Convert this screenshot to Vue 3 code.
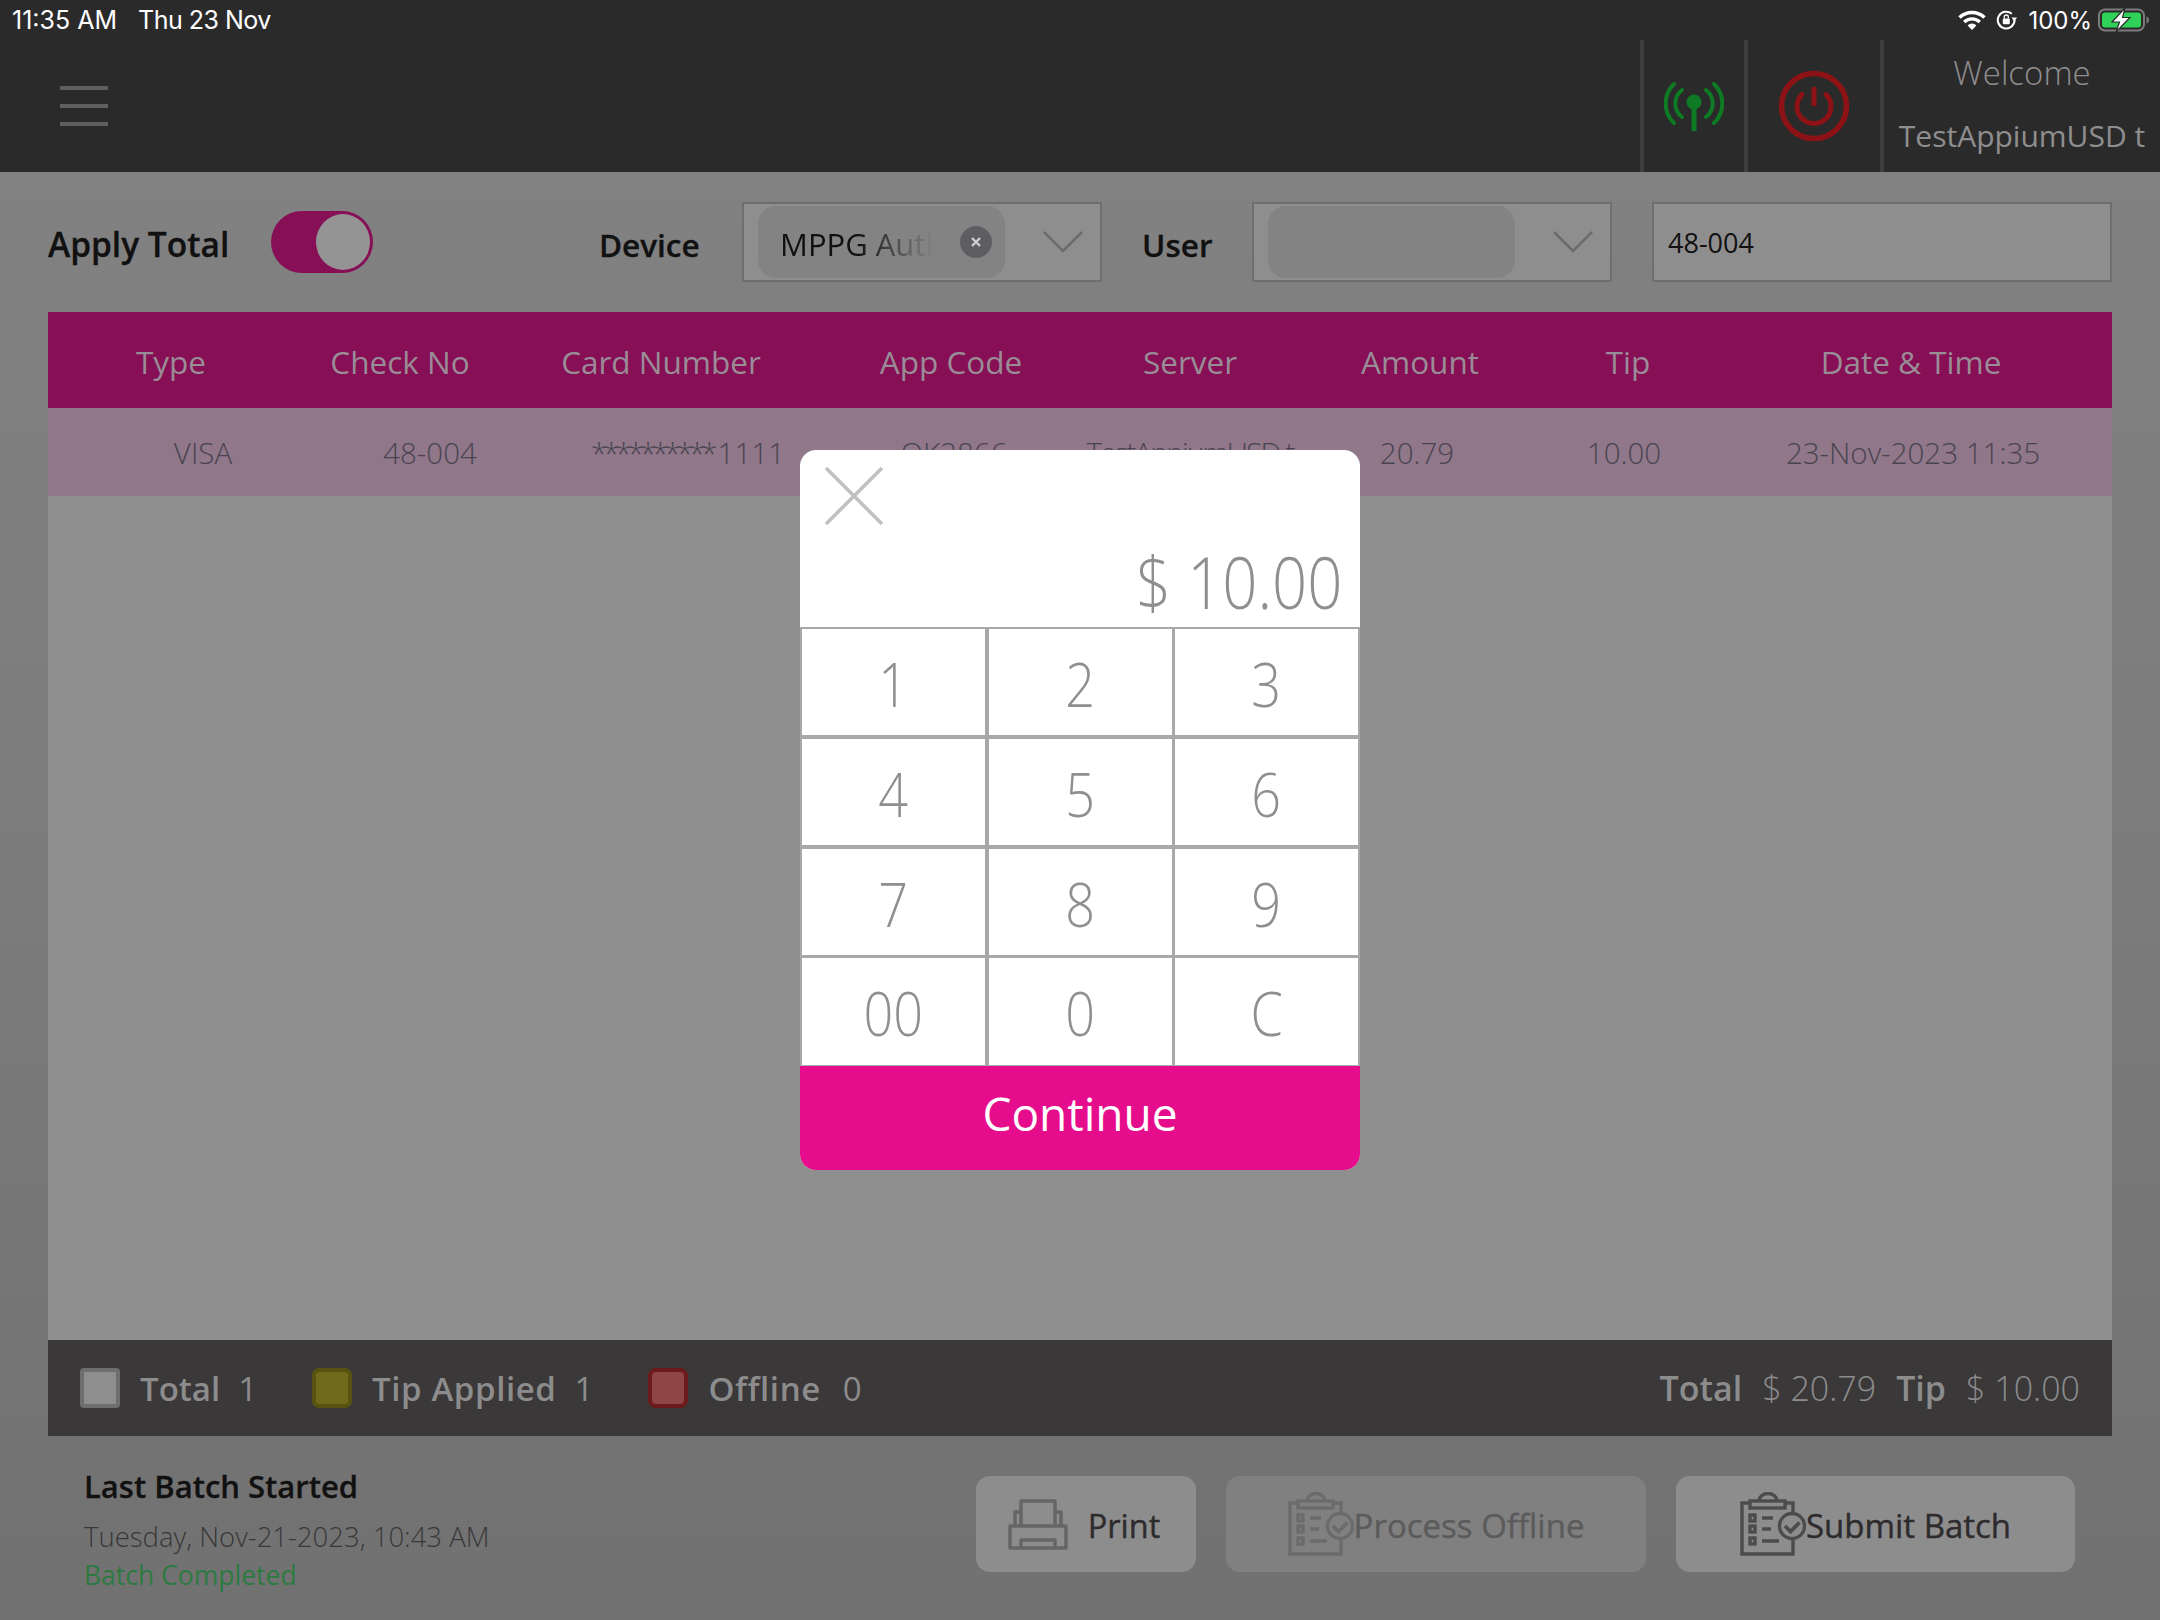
<template>
    <div class="screen">
        <header class="topbar">
            <div class="status-bar">
                <div class="status-time">
                    <span>11:35 AM</span>
                    <span class="status-date">Thu 23 Nov</span>
                </div>
                <div class="status-icons">
                    <svg class="wifi" width="28" height="20" viewBox="0 0 28 20">
                        <path d="M1.5 7.5a18 18 0 0 1 25 0" fill="none" stroke="#fff" stroke-width="3.4" />
                        <path d="M6.2 12a11.4 11.4 0 0 1 15.6 0" fill="none" stroke="#fff" stroke-width="3.4" />
                        <path d="M14 20l-4.4-4.6a6.2 6.2 0 0 1 8.8 0z" fill="#fff" />
                    </svg>
                    <svg class="rotation" width="22" height="20" viewBox="0 0 22 20">
                        <path d="M18.6 10a8.4 8.4 0 1 1-2.8-6.2" fill="none" stroke="#fff" stroke-width="2" />
                        <path d="M15.5 7.5l5.5 0-2.7 4z" fill="#fff" />
                        <rect x="6.8" y="8.6" width="7" height="5.6" rx="1" fill="#fff" />
                        <path d="M8.3 8.6V7a2 2 0 0 1 4 0v1.6" fill="none" stroke="#fff" stroke-width="1.3" />
                    </svg>
                    <span class="status-percent">100%</span>
                    <svg class="battery" width="52" height="24" viewBox="0 0 52 24">
                        <rect x="1" y="1.5" width="45" height="21" rx="6" fill="none" stroke="#7b7b7b" stroke-width="2" />
                        <rect x="4" y="4.5" width="39" height="15" rx="3" fill="#30d158" />
                        <path d="M48.5 8.5c1.6.4 2.5 1.7 2.5 3.5s-.9 3.1-2.5 3.5z" fill="#7b7b7b" />
                        <path d="M27 0L14 14h7.500L18 24l14-14.500h-7.500z" fill="#fff" stroke="#2b2a2b" stroke-width="1.2" />
                    </svg>
                </div>
            </div>
            <div class="nav-row">
                <div class="menu-icon">
                    <span></span>
                    <span></span>
                    <span></span>
                </div>
                <div class="nav-cell signal-cell">
                    <svg width="60" height="50" viewBox="0 0 60 50">
                        <g fill="none" stroke="#0e7a24" stroke-width="4" stroke-linecap="round">
                            <path d="M10 3A27 27 0 0 0 10 42" />
                            <path d="M18 9A17 17 0 0 0 18 36" />
                            <path d="M42 9A17 17 0 0 1 42 36" />
                            <path d="M50 3A27 27 0 0 1 50 42" />
                        </g>
                        <circle cx="30" cy="21" r="7.500" fill="#0e7a24" />
                        <rect x="27.500" y="21" width="5" height="29" fill="#0e7a24" />
                    </svg>
                </div>
                <div class="nav-cell power-cell">
                    <svg width="72" height="72" viewBox="0 0 72 72">
                        <circle cx="36" cy="36" r="32.500" fill="none" stroke="#8c1216" stroke-width="5.500" />
                        <path d="M24 24.500a17 17 0 1 0 24 0" fill="none" stroke="#8c1216" stroke-width="5" stroke-linecap="round" />
                        <rect x="33.500" y="17" width="5" height="19" fill="#8c1216" />
                    </svg>
                </div>
                <div class="nav-cell welcome-cell">
                    <span class="welcome">Welcome</span>
                    <span class="user-name">TestAppiumUSD t</span>
                </div>
            </div>
        </header>

        <main class="page">
            <section class="toolbar">
                <strong class="apply-label">Apply Total</strong>
                <div class="toggle"><span class="toggle-knob"></span></div>
                <strong class="device-label">Device</strong>
                <div class="select-box">
                    <div class="chip">
                        <span class="chip-text">MPPG Auth</span>
                        <span class="chip-clear">
                            <svg width="12" height="12" viewBox="0 0 12 12">
                                <path d="M2 2l8 8M10 2l-8 8" stroke="#d0d0d0" stroke-width="2.4" />
                            </svg>
                        </span>
                    </div>
                    <svg class="chevron" width="40" height="22" viewBox="0 0 40 22">
                        <path d="M1 1l19 19L39 1" fill="none" stroke="#6c6b6c" stroke-width="2.500" />
                    </svg>
                </div>
                <strong class="user-label">User</strong>
                <div class="select-box">
                    <div class="chip"></div>
                    <svg class="chevron" width="40" height="22" viewBox="0 0 40 22">
                        <path d="M1 1l19 19L39 1" fill="none" stroke="#6c6b6c" stroke-width="2.500" />
                    </svg>
                </div>
                <div class="search-box">48-004</div>
            </section>

            <section class="table">
                <div class="table-head">
                    <span v-for="title in headings" :key="title">{{ title }}</span>
                </div>
                <div class="table-row">
                    <span>VISA</span>
                    <span>48-004</span>
                    <span class="card-no"><i>**********</i>1111</span>
                    <span>OK2866</span>
                    <span class="server">TestAppiumUSD t</span>
                    <span>20.79</span>
                    <span>10.00</span>
                    <span>23-Nov-2023 11:35</span>
                </div>
                <div class="table-body"></div>
                <div class="summary">
                    <div class="legend total">
                        <i class="swatch"></i>
                        <b>Total</b>
                        <span>1</span>
                    </div>
                    <div class="legend tip">
                        <i class="swatch"></i>
                        <b>Tip Applied</b>
                        <span>1</span>
                    </div>
                    <div class="legend offline">
                        <i class="swatch"></i>
                        <b>Offline</b>
                        <span>0</span>
                    </div>
                    <div class="totals">
                        <b>Total</b>
                        <span>$ 20.79</span>
                        <b>Tip</b>
                        <span>$ 10.00</span>
                    </div>
                </div>
            </section>

            <footer class="footer">
                <div class="batch">
                    <strong>Last Batch Started</strong>
                    <span class="batch-date">Tuesday, Nov-21-2023, 10:43 AM</span>
                    <span class="batch-state">Batch Completed</span>
                </div>
                <div class="actions">
                    <button class="action print">
                        <svg width="60" height="51" viewBox="0 0 60 51">
                            <g fill="none" stroke="#666566" stroke-width="3.500" stroke-linejoin="round">
                                <rect x="2" y="27" width="56" height="22" />
                                <path d="M13 26V2h34v24" />
                                <path d="M13 13H7v13M47 13h6v13" />
                                <path d="M13 49V41h34v8" />
                            </g>
                        </svg>
                        <span>Print</span>
                    </button>
                    <button class="action process">
                        <svg class="clipboard" width="66" height="64" viewBox="0 0 66 64">
                            <use href="#clipboard-icon" />
                        </svg>
                        <span>Process Offline</span>
                    </button>
                    <button class="action submit">
                        <svg class="clipboard" width="66" height="64" viewBox="0 0 66 64">
                            <use href="#clipboard-icon" />
                        </svg>
                        <span>Submit Batch</span>
                    </button>
                </div>
            </footer>
        </main>

        <svg class="icon-defs" width="0" height="0">
            <symbol id="clipboard-icon" viewBox="0 0 66 64">
                <g fill="none" stroke="currentColor" stroke-width="3.400">
                    <path d="M9 11H2v51h51V46" />
                    <path d="M46 11h7v10" />
                    <rect x="10" y="9" width="35" height="7" />
                    <path d="M19 9a9 7.500 0 0 1 18 0" />
                    <rect x="10" y="23" width="5" height="6" />
                    <rect x="10" y="34" width="5" height="6" />
                    <rect x="10" y="46" width="5" height="6" />
                    <path d="M22 26h11M22 37h9M22 49h17" />
                    <circle cx="52" cy="34" r="12.500" fill="var(--btn-bg)" />
                    <path d="M45 34l5.500 5.500 9-9" stroke-width="3.800" />
                </g>
            </symbol>
        </svg>

        <div class="keypad-modal">
            <div class="modal-head">
                <svg class="modal-close" width="58" height="58" viewBox="0 0 58 58">
                    <path d="M1 1l56 56M57 1L1 57" stroke="#c0c0c0" stroke-width="3.500" />
                </svg>
                <div class="modal-amount">$ 10.00</div>
            </div>
            <div class="keys">
                <div v-for="key in keys" :key="key" class="key"><span>{{ key }}</span></div>
            </div>
            <div class="continue">Continue</div>
        </div>
    </div>
</template>

<script setup>
const headings = ["Type", "Check No", "Card Number", "App Code", "Server", "Amount", "Tip", "Date & Time"];
const keys = ["1", "2", "3", "4", "5", "6", "7", "8", "9", "00", "0", "C"];
</script>

<style>
body {
    margin: 0;
}
</style>

<style scoped>
.screen {
    position: relative;
    display: flex;
    flex-direction: column;
    width: 2160px;
    height: 1620px;
    overflow: hidden;
    font-family: "Open Sans", "Noto Sans", sans-serif;
    background: #7c7b7c;
}

.topbar {
    position: relative;
    height: 172px;
    background: #2b2a2b;
}

.status-bar {
    display: flex;
    justify-content: space-between;
    align-items: center;
    height: 40px;
    font-family: Inter, "Liberation Sans", sans-serif;
    font-size: 25px;
    color: #fff;
}

.status-time {
    display: flex;
    gap: 21px;
    padding-left: 12px;
}

.status-date {
    letter-spacing: -0.5px;
}

.status-icons {
    display: flex;
    align-items: center;
    padding-right: 10px;
}

.wifi {
    margin-right: 10px;
}

.status-percent {
    margin: 0 6px 0 10px;
    font-size: 24px;
}

.nav-row {
    display: flex;
    height: 132px;
}

.menu-icon {
    display: flex;
    flex-direction: column;
    gap: 14px;
    width: 48px;
    margin: 46px auto 0 60px;
}

.menu-icon span {
    height: 4px;
    background: #5f5f5f;
}

.nav-cell {
    display: flex;
    align-items: center;
    justify-content: center;
    border-left: 4px solid #3f3e3f;
}

.signal-cell {
    width: 100px;
}

.power-cell {
    width: 132px;
}

.welcome-cell {
    flex-direction: column;
    justify-content: flex-start;
    width: 276px;
    overflow: hidden;
    white-space: nowrap;
    color: #8f8e8f;
    font-size: 33px;
}

.welcome {
    margin-top: 10px;
    font-weight: 300;
}

.user-name {
    margin-top: 20px;
    font-size: 30px;
}

.page {
    display: flex;
    flex: 1;
    flex-direction: column;
    background: linear-gradient(180deg, #828182 0%, #7e7d7e 40%, #727172 100%);
}

.toolbar {
    display: flex;
    align-items: center;
    flex: none;
    height: 140px;
    padding-left: 48px;
    color: #111;
    font-size: 31.5px;
}

.toolbar strong {
    font-weight: 600;
    white-space: nowrap;
    -webkit-text-stroke: 0.3px currentColor;
}

.apply-label {
    width: 223px;
    margin-top: 4px;
    font-size: 33.5px;
}

.toggle {
    display: flex;
    justify-content: flex-end;
    align-items: center;
    box-sizing: border-box;
    width: 102px;
    height: 62px;
    padding-right: 3px;
    border-radius: 31px;
    background: #860f56;
}

.toggle-knob {
    width: 54px;
    height: 56px;
    border-radius: 50%;
    background: #959495;
}

.device-label {
    width: 143px;
    margin-left: 226px;
    margin-top: 4px;
}

.user-label {
    width: 110px;
    margin-left: 40px;
    margin-top: 4px;
}

.select-box {
    display: flex;
    align-items: center;
    box-sizing: border-box;
    width: 360px;
    height: 80px;
    padding-left: 14px;
    border: 2px solid #6f6e6f;
    background: #8f8e8f;
}

.chip {
    display: flex;
    align-items: center;
    box-sizing: border-box;
    width: 247px;
    height: 72px;
    padding: 0 13px 0 22px;
    border-radius: 18px;
    background: #848384;
}

.chip-text {
    width: 155px;
    margin-top: 4px;
    overflow: hidden;
    white-space: nowrap;
    font-size: 31px;
    mask-image: linear-gradient(90deg, #000 50%, rgba(0, 0, 0, 0.25) 85%, transparent 100%);
}

.chip-clear {
    display: flex;
    align-items: center;
    justify-content: center;
    width: 32px;
    height: 32px;
    margin-left: auto;
    border-radius: 50%;
    background: #5e5d62;
}

.chevron {
    margin-left: 38px;
}

.search-box {
    display: flex;
    align-items: center;
    box-sizing: border-box;
    width: 460px;
    height: 80px;
    margin-left: 40px;
    padding-left: 14px;
    border: 2px solid #6f6e6f;
    background: #8f8e8f;
    font-size: 27px;
}

.table {
    display: flex;
    flex: none;
    flex-direction: column;
    width: 2064px;
    height: 1124px;
    margin-left: 48px;
}

.table-head,
.table-row {
    display: grid;
    align-items: center;
    text-align: center;
    white-space: nowrap;
}

.table-head {
    grid-template-columns: 246px 212px 310px 270px 208px 252px 164px 402px;
    height: 96px;
    padding-top: 3px;
    box-sizing: border-box;
    background: #860f56;
    color: #9a8c96;
    font-size: 31.5px;
}

.table-row {
    grid-template-columns: 310px 144px 372px 160px 312px 142px 272px 306px;
    height: 88px;
    background: #907789;
    color: #4a4450;
    font-size: 29.5px;
    font-weight: 300;
}

.card-no i {
    font-style: normal;
    letter-spacing: -4px;
    padding-right: 4px;
}

.server {
    letter-spacing: -1.8px;
}

.table-body {
    flex: 1;
    background: #908f90;
}

.summary {
    display: flex;
    align-items: center;
    height: 96px;
    padding: 0 32px 0 32px;
    background: #3a3839;
    color: #8d8c8d;
    font-size: 33px;
}

.summary b {
    font-weight: 600;
}

.legend {
    display: flex;
    align-items: center;
    margin-right: 55px;
    white-space: nowrap;
}

.legend b {
    margin: 0 18px 0 20px;
}

.tip b,
.offline b {
    letter-spacing: 0.6px;
}

.offline b {
    margin-right: 22px;
}

.swatch {
    box-sizing: border-box;
    width: 40px;
    height: 40px;
    border: 4px solid #6e6e6e;
    border-radius: 4px;
    background: #8f8e8f;
}

.tip .swatch {
    border-color: #565311;
    border-radius: 7px;
    background: #6f6b1a;
}

.offline .swatch {
    border-color: #6c1a1a;
    border-radius: 8px;
    background: #8f4545;
}

.totals {
    display: flex;
    gap: 20px;
    margin-left: auto;
    white-space: nowrap;
    font-size: 34px;
}

.totals span {
    font-weight: 300;
}

.footer {
    display: flex;
    flex: 1;
    justify-content: space-between;
    padding: 0 37px 0 36px;
    margin-left: 48px;
    width: 1991px;
}

.batch {
    display: flex;
    flex-direction: column;
    padding-top: 29px;
}

.batch strong {
    color: #111;
    font-size: 31px;
    font-weight: 600;
    -webkit-text-stroke: 0.3px currentColor;
}

.batch-date {
    margin-top: 11px;
    color: #383838;
    font-size: 27.5px;
    font-weight: 300;
}

.batch-state {
    margin-top: 2px;
    color: #2d7a41;
    font-size: 26.5px;
}

.actions {
    display: flex;
    gap: 30px;
    padding-top: 40px;
}

.action {
    --btn-bg: #8e8d8e;
    display: flex;
    align-items: center;
    justify-content: center;
    box-sizing: border-box;
    height: 96px;
    padding: 0;
    border: 0;
    border-radius: 14px;
    background: var(--btn-bg);
    color: #2d2b2c;
    font-family: inherit;
    font-size: 33px;
}

.action span {
    margin-top: 2px;
    -webkit-text-stroke: 0.4px currentColor;
}

.print {
    gap: 20px;
    width: 220px;
    padding-right: 4px;
    font-size: 32.5px;
}

.process {
    --btn-bg: #818081;
    width: 420px;
    color: #5c5b5c;
}

.submit {
    width: 399px;
}

.clipboard {
    color: #4d4c4d;
}

.process .clipboard {
    color: #6c6b6c;
}

.icon-defs {
    position: absolute;
}

.keypad-modal {
    position: absolute;
    top: 450px;
    left: 800px;
    display: flex;
    flex-direction: column;
    width: 560px;
    height: 720px;
    overflow: hidden;
    border-radius: 16px;
    background: #fff;
}

.modal-head {
    position: relative;
    flex: none;
    height: 177px;
}

.modal-close {
    position: absolute;
    top: 17px;
    left: 25px;
}

.modal-amount {
    position: absolute;
    right: 18px;
    bottom: -3px;
    color: #8f8f8f;
    font-size: 72px;
    font-weight: 300;
    transform: scaleX(0.855);
    transform-origin: right center;
}

.keys {
    display: grid;
    flex: none;
    grid-template-columns: repeat(3, 1fr);
    grid-auto-rows: 1fr;
    gap: 3.5px;
    box-sizing: border-box;
    height: 439px;
    padding: 2px 2px 1.5px;
    background: #a8a8a8;
}

.key {
    display: flex;
    align-items: center;
    justify-content: center;
    padding-top: 4px;
    background: #fff;
    color: #8f8f8f;
    font-size: 60px;
    font-weight: 300;
}

.key span {
    transform: scaleX(0.87);
}

.continue {
    display: flex;
    flex: 1;
    align-items: center;
    justify-content: center;
    padding-bottom: 10px;
    background: #e60d8c;
    color: #fff;
    font-size: 46px;
}
</style>
